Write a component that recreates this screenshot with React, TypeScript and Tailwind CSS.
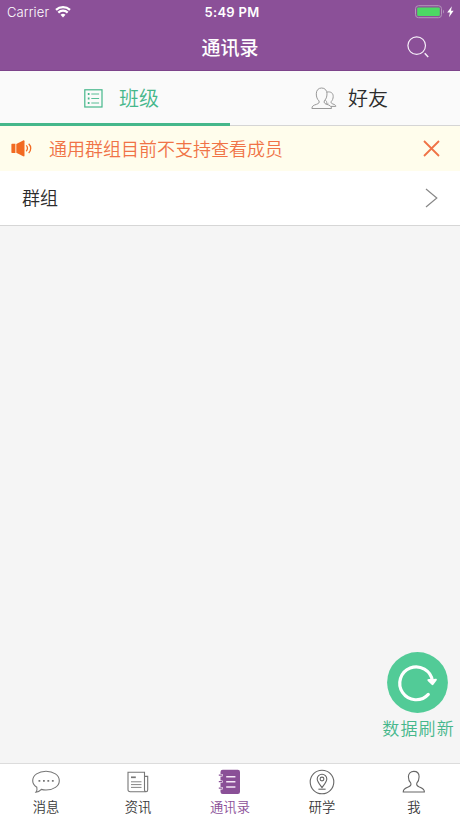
import type { ReactNode } from "react"

function WifiIcon() {
  return (
    <svg width="16" height="12" viewBox="0 0 16 12" fill="#fff">
      <path d="M8 11.5 5.5 8.8a3.7 3.7 0 0 1 5 0Z" />
      <path d="M3.3 6.6a6.8 6.8 0 0 1 9.4 0M1 3.9a10.2 10.2 0 0 1 14 0" fill="none" stroke="#fff" strokeWidth="2.2" />
    </svg>
  )
}

function BatteryIcon() {
  return (
    <svg width="40" height="14" viewBox="0 0 40 14" fill="none">
      <rect x="0.5" y="0.7" width="26" height="12" rx="3" stroke="#b596bb" />
      <rect x="2.2" y="2.4" width="22.6" height="8.6" rx="1.2" fill="#4cd964" />
      <path d="M28 4.8c1.3.5 1.3 3.3 0 3.8Z" fill="#b596bb" />
      <path d="m36.8 1.2-4.6 6.2h2.7l-.9 4.8 4.6-6.4H36Z" fill="#fff" />
    </svg>
  )
}

function SearchIcon() {
  return (
    <svg width="22" height="22" viewBox="0 0 22 22" fill="none" stroke="#f6eef8" strokeWidth="1.2">
      <circle cx="9.7" cy="9.6" r="8.8" />
      <path d="m17.7 17.3 3.5 3.7" strokeWidth="1.5" />
    </svg>
  )
}

function ListIcon() {
  return (
    <svg width="19" height="19" viewBox="0 0 19 19" fill="none" stroke="#45b78b">
      <rect x="0.8" y="0.8" width="17.2" height="17.2" strokeWidth="1.2" />
      <path d="M7.3 5h7.8M7.3 9.5h7.8M7.3 14h7.8" strokeWidth="0.9" />
      <path d="M3.8 5h1.7M3.8 9.5h1.7M3.8 14h1.7" strokeWidth="1.8" />
    </svg>
  )
}

function FriendsIcon() {
  return (
    <svg width="26" height="23" viewBox="0 0 26 23" fill="none" stroke="#999" strokeLinejoin="round">
      <path d="M8 13.9C6.2 12.4 5.3 9.8 5.3 6.8 5.3 3.2 7.4 1 10.6 1s5.4 2.2 5.4 5.8c0 3-1 5.5-2.7 7.1-.6 1.9.3 2.6 2.4 3.4 3 1 4.8 1.6 4.8 4.2H.9c0-2.6 1.7-3.2 4.6-4.2 2.3-.8 3.1-1.5 2.5-3.4Z" />
      <path d="M16 5.1c3.8-.8 6.2 1 6.2 4.3 0 2.2-.8 4-2 5.2-.4 1.3.2 1.8 1.7 2.4 2 .6 2.9 1.2 2.9 2.4h-4.9" />
      <path d="M14.2 12.6c.3.8.8 1.5 1.4 2 .3 1 .1 1.6-.8 2.1.8.5 2.1.1 2.6-.4" strokeWidth="0.9" />
    </svg>
  )
}

function SpeakerIcon() {
  return (
    <svg width="21" height="17" viewBox="0 0 21 17" fill="#f26a22">
      <path d="M.4 4.3c0-.4.2-.6.6-.6h3.4v9.2H1c-.4 0-.6-.2-.6-.6Z" />
      <path d="M5.3 3.9 12.2.4c.8-.4 1.3 0 1.3.8v14.3c0 .8-.5 1.2-1.3.8l-6.9-3.6Z" />
      <path d="M15.2 5.4c1.7 1.6 1.7 4.3 0 5.9M17.7 3.7c2.7 2.5 2.7 6.8 0 9.3" fill="none" stroke="#f26a22" strokeWidth="1.3" />
    </svg>
  )
}

function RefreshIcon() {
  return (
    <svg width="61" height="61" viewBox="0 0 61 61" fill="none">
      <circle cx="30.5" cy="30.5" r="30.4" fill="#52cb97" />
      <path d="M41.3 42.4A16.4 16.4 0 1 1 45.4 29" stroke="#fff" strokeWidth="3.2" strokeLinecap="round" />
      <path d="M41 27.3c1.7-.5 2.7-.1 4.2.1 1.5-.2 2.6-1 4-.6.8.3.8 1 .3 1.7l-3 4.1c-.6.7-1.2.7-1.8.1l-3.9-3.8c-.7-.7-.6-1.3.2-1.6Z" fill="#fff" />
    </svg>
  )
}

function MessageIcon() {
  return (
    <svg width="28" height="24" viewBox="0 0 28 24" fill="none" stroke="#777">
      <path d="M4.8 17.2C2.2 15.5.7 13.4.7 10.7.7 5.3 6.6 1.2 14 1.2s13.3 4.1 13.3 9.5S21.5 20 14 20c-1.7 0-3.2-.2-4.6-.6-1.6 1.8-3.3 2.6-5.5 2.9 1.1-1.5 1.5-3 .9-5.1Z" strokeWidth="1.1" />
      <path d="M6.5 10.9h1.8M11 10.9h1.8M15.4 10.9h1.8M19.9 10.9h1.8" strokeWidth="1.8" />
    </svg>
  )
}

function NewsIcon() {
  return (
    <svg width="22" height="22" viewBox="0 0 22 22" fill="none" stroke="#777" strokeWidth="1.1">
      <path d="M17.5 20.7H3.3C1.8 20.7 1 19.9 1 18.6V1.3h16.5v17.4c0 2.7 3.2 2.6 3.2 0V5.4h-3M17.5 20.7h1.8" />
      <path d="M4 10.8h10.5M4 13.6h10.5M4 16.4h10.5" strokeWidth="0.9" />
      <path d="M4 6.3h4.8" strokeWidth="1.7" />
    </svg>
  )
}

function ContactsIcon() {
  return (
    <svg width="24" height="26" viewBox="0 0 24 26" fill="none">
      <rect x="2.5" y="0.8" width="19.5" height="24.2" rx="2.2" fill="#8a5097" />
      <path d="M0 6.2h4.6M0 12.6h4.6M0 19.2h4.6" stroke="#fff" strokeWidth="2.4" />
      <path d="M.8 6.2H4M.8 12.6H4M.8 19.2H4" stroke="#8a5097" strokeWidth="1.3" />
      <path d="M8.2 7.7h9.2M8.2 12.8h9.2M8.2 17.9h9.2" stroke="#f5e8f7" strokeWidth="1.5" />
    </svg>
  )
}

function StudyIcon() {
  return (
    <svg width="26" height="26" viewBox="0 0 26 26" fill="none" stroke="#666" strokeWidth="1.1">
      <circle cx="13" cy="13" r="11.8" />
      <path d="M13 18.6c-2.5-3.4-4.8-5.9-4.8-8.5a4.8 4.8 0 0 1 9.6 0c0 2.6-2.3 5.1-4.8 8.5Z" />
      <circle cx="13" cy="10" r="1.9" />
      <path d="M9.4 20.2h7.2" />
    </svg>
  )
}

function MeIcon() {
  return (
    <svg width="24" height="24" viewBox="0 0 24 24" fill="none" stroke="#666" strokeWidth="1.1" strokeLinejoin="round">
      <path d="M8.8 13.2C7.3 11.7 6.4 9.4 6.4 6.8 6.4 3.6 8.6 1.4 11.8 1.4s5.3 2.2 5.3 5.4c0 2.6-.9 4.9-2.3 6.4-.6 2.2.3 3 2.6 3.9 3.3 1.2 5 2.1 5 4.9H1.2c0-2.8 1.7-3.7 5-4.9 2.4-.9 3.3-1.7 2.6-3.9Z" />
    </svg>
  )
}

type NavItem = {
  label: string
  icon: ReactNode
  active?: boolean
}

const navItems: NavItem[] = [
  { label: "消息", icon: <MessageIcon /> },
  { label: "资讯", icon: <NewsIcon /> },
  { label: "通讯录", icon: <ContactsIcon />, active: true },
  { label: "研学", icon: <StudyIcon /> },
  { label: "我", icon: <MeIcon /> },
]

export default function App() {
  return (
    <div className="flex h-screen w-full flex-col overflow-hidden bg-[#f5f5f5] font-['Inter','Noto_Sans_CJK_SC',sans-serif] font-[350] text-[#2c2c2c]">
      {/* Header */}
      <header className="h-[71px] shrink-0 border-b border-[#7d448b] bg-[#8b5098] text-white">
        <div className="grid h-6 grid-cols-3 items-center text-[13px] leading-6">
          <div className="flex items-center gap-[6px] pl-[7px]">
            <span className="tracking-[0.1px]">Carrier</span>
            <WifiIcon />
          </div>
          <span className="pl-1 text-center font-semibold tracking-[0.3px]">5:49 PM</span>
          <div className="flex justify-end pr-[5px]">
            <BatteryIcon />
          </div>
        </div>
        <div className="grid h-[46px] grid-cols-3 items-center">
          <h1 className="col-start-2 pt-[3px] text-center text-[19px] font-medium leading-[43px]">通讯录</h1>
          <button className="justify-self-end pr-[31px]">
            <SearchIcon />
          </button>
        </div>
      </header>

      {/* Tabs */}
      <div className="grid h-[55px] shrink-0 grid-cols-2 bg-[#fafafa] text-[20px]">
        <button className="flex items-center gap-4 border-b-[3px] border-[#45b78b] pl-[84px] pt-[2px] text-[#45b78b]">
          <ListIcon />
          <span className="pt-[2px]">班级</span>
        </button>
        <button className="flex items-center gap-[11px] border-b border-[#d5d5d5] pl-[81px]">
          <FriendsIcon />
          <span className="pt-[2px]">好友</span>
        </button>
      </div>

      {/* Notice */}
      <div className="flex h-[45px] shrink-0 items-center bg-[#fffdec] pl-[11px] pr-5 text-[18px] text-[#f07346]">
        <SpeakerIcon />
        <span className="ml-[17px] flex-1 pt-[1px]">通用群组目前不支持查看成员</span>
        <button>
          <svg width="17" height="17" viewBox="0 0 17 17" fill="none" stroke="#f07346" strokeWidth="1.8">
            <path d="m1 1 15 15M16 1 1 16" />
          </svg>
        </button>
      </div>

      {/* Groups */}
      <div className="flex h-[55px] shrink-0 items-center justify-between border-b border-[#d6d6d6] bg-white pl-[22px] pr-[22px] text-[18px]">
        <span className="pt-[1px]">群组</span>
        <svg width="13" height="20" viewBox="0 0 13 20" fill="none" stroke="#888" strokeWidth="1.2">
          <path d="m1 1 10.8 9L1 19" />
        </svg>
      </div>

      <main className="flex flex-1 items-end justify-end pb-5 pr-[5px]">
        <button className="flex flex-col items-center">
          <span className="pr-[2px]">
            <RefreshIcon />
          </span>
          <span className="pt-[2px] text-[17px] leading-[28px] tracking-[1.2px] text-[#45b78b]">数据刷新</span>
        </button>
      </main>

      {/* Bottom nav */}
      <nav className="grid h-[55px] shrink-0 grid-cols-5 border-t border-[#dcdcdc] bg-white">
        {navItems.map((item) => (
          <button key={item.label} className="flex flex-col items-center pt-1">
            <span className="flex h-[27px] items-center">{item.icon}</span>
            <span className={item.active ? "text-[13.3px] leading-[25px] text-[#8b5098]" : "text-[13.3px] leading-[25px] text-[#3a3a3a]"}>
              {item.label}
            </span>
          </button>
        ))}
      </nav>
    </div>
  )
}
